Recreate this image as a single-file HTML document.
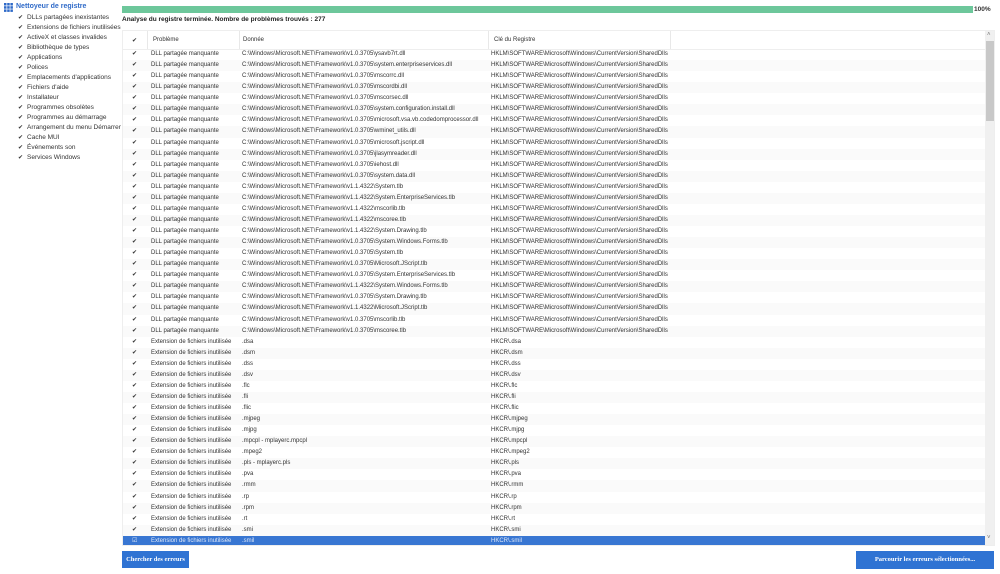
<!DOCTYPE html>
<html><head><meta charset="utf-8"><style>
body{margin:0;width:1000px;height:574px;background:#fff;font-family:"Liberation Sans",sans-serif;position:relative;overflow:hidden;color:#333}
.side{position:absolute;left:0;top:0;font-size:6.5px;color:#333}
.side .t{position:absolute;left:16px;top:3px;font-weight:bold;color:#2f6ac8;font-size:7px;white-space:nowrap}
.side .i{position:absolute;left:18px;white-space:nowrap}
.side .i b{font-weight:normal;font-size:6px;margin-right:4px}
.prog{position:absolute;left:122px;top:6px;width:851px;height:7px;background:#6dc79b}
.pct{position:absolute;left:974px;top:6px;font-size:6.5px;font-weight:bold}
.title{position:absolute;left:122px;top:16px;font-size:6.5px;font-weight:bold;color:#222}
.tbl{position:absolute;left:122px;top:30px;width:873px;height:516px;border:1px solid #eee;box-sizing:border-box;overflow:hidden}
.hd{position:absolute;left:0;top:0;width:862px;height:18px;border-bottom:1px solid #eee}
.hd span{position:absolute;top:6px;font-size:6px}
.vl{position:absolute;top:0;width:1px;height:18px;background:#e8e8e8}
.rows{position:absolute;left:0;top:18px;width:862px}
.r{height:11.07px;position:relative;font-size:6px;line-height:11px;white-space:nowrap}
.r:nth-child(even){background:#fafafa}
.r span{position:absolute;top:0}
.r .c{left:9px;font-size:6px}
.r .p{left:28px}.r .d{left:119px}.r .k{left:368px}
.r.sel{background:#3876d2;color:#dfe8f7}
.sb{position:absolute;left:862px;top:0;width:10px;height:514px;background:#f0f0f0}
.th{position:absolute;left:1px;top:10px;width:8px;height:80px;background:#c8c8c8}
.btn{position:absolute;background:#2f73d3;color:#fff;font-family:"Liberation Serif",serif;font-weight:bold;font-size:6.5px;text-align:center}
</style></head><body>
<div class="side">
<svg style="position:absolute;left:4px;top:3px" width="9" height="9"><g fill="#2f6ac8"><rect x="0" y="0" width="2.5" height="2.5"/><rect x="3.2" y="0" width="2.5" height="2.5"/><rect x="6.4" y="0" width="2.5" height="2.5"/><rect x="0" y="3.2" width="2.5" height="2.5"/><rect x="3.2" y="3.2" width="2.5" height="2.5"/><rect x="6.4" y="3.2" width="2.5" height="2.5"/><rect x="0" y="6.4" width="2.5" height="2.5"/><rect x="3.2" y="6.4" width="2.5" height="2.5"/><rect x="6.4" y="6.4" width="2.5" height="2.5"/></g></svg>
<div class="t">Nettoyeur de registre</div>
<div class="i" style="top:14px"><b>✔</b>DLLs partagées inexistantes</div>
<div class="i" style="top:24px"><b>✔</b>Extensions de fichiers inutilisées</div>
<div class="i" style="top:34px"><b>✔</b>ActiveX et classes invalides</div>
<div class="i" style="top:44px"><b>✔</b>Bibliothèque de types</div>
<div class="i" style="top:54px"><b>✔</b>Applications</div>
<div class="i" style="top:64px"><b>✔</b>Polices</div>
<div class="i" style="top:74px"><b>✔</b>Emplacements d'applications</div>
<div class="i" style="top:84px"><b>✔</b>Fichiers d'aide</div>
<div class="i" style="top:94px"><b>✔</b>Installateur</div>
<div class="i" style="top:104px"><b>✔</b>Programmes obsolètes</div>
<div class="i" style="top:114px"><b>✔</b>Programmes au démarrage</div>
<div class="i" style="top:124px"><b>✔</b>Arrangement du menu Démarrer</div>
<div class="i" style="top:134px"><b>✔</b>Cache MUI</div>
<div class="i" style="top:144px"><b>✔</b>Événements son</div>
<div class="i" style="top:154px"><b>✔</b>Services Windows</div>
</div>
<div class="prog"></div><div class="pct">100%</div>
<div class="title">Analyse du registre terminée. Nombre de problèmes trouvés : 277</div>
<div class="tbl">
<div class="hd"><span style="left:9px">✔</span><span style="left:30px">Problème</span><span style="left:120px">Donnée</span><span style="left:371px">Clé du Registre</span>
<div class="vl" style="left:24px"></div><div class="vl" style="left:116px"></div><div class="vl" style="left:365px"></div><div class="vl" style="left:547px"></div></div>
<div class="rows">
<div class="r"><span class="c">✔</span><span class="p">DLL partagée manquante</span><span class="d">C:\Windows\Microsoft.NET\Framework\v1.0.3705\ysavb7rt.dll</span><span class="k">HKLM\SOFTWARE\Microsoft\Windows\CurrentVersion\SharedDlls</span></div>
<div class="r"><span class="c">✔</span><span class="p">DLL partagée manquante</span><span class="d">C:\Windows\Microsoft.NET\Framework\v1.0.3705\system.enterpriseservices.dll</span><span class="k">HKLM\SOFTWARE\Microsoft\Windows\CurrentVersion\SharedDlls</span></div>
<div class="r"><span class="c">✔</span><span class="p">DLL partagée manquante</span><span class="d">C:\Windows\Microsoft.NET\Framework\v1.0.3705\mscorrc.dll</span><span class="k">HKLM\SOFTWARE\Microsoft\Windows\CurrentVersion\SharedDlls</span></div>
<div class="r"><span class="c">✔</span><span class="p">DLL partagée manquante</span><span class="d">C:\Windows\Microsoft.NET\Framework\v1.0.3705\mscordbi.dll</span><span class="k">HKLM\SOFTWARE\Microsoft\Windows\CurrentVersion\SharedDlls</span></div>
<div class="r"><span class="c">✔</span><span class="p">DLL partagée manquante</span><span class="d">C:\Windows\Microsoft.NET\Framework\v1.0.3705\mscorsec.dll</span><span class="k">HKLM\SOFTWARE\Microsoft\Windows\CurrentVersion\SharedDlls</span></div>
<div class="r"><span class="c">✔</span><span class="p">DLL partagée manquante</span><span class="d">C:\Windows\Microsoft.NET\Framework\v1.0.3705\system.configuration.install.dll</span><span class="k">HKLM\SOFTWARE\Microsoft\Windows\CurrentVersion\SharedDlls</span></div>
<div class="r"><span class="c">✔</span><span class="p">DLL partagée manquante</span><span class="d">C:\Windows\Microsoft.NET\Framework\v1.0.3705\microsoft.vsa.vb.codedomprocessor.dll</span><span class="k">HKLM\SOFTWARE\Microsoft\Windows\CurrentVersion\SharedDlls</span></div>
<div class="r"><span class="c">✔</span><span class="p">DLL partagée manquante</span><span class="d">C:\Windows\Microsoft.NET\Framework\v1.0.3705\wminet_utils.dll</span><span class="k">HKLM\SOFTWARE\Microsoft\Windows\CurrentVersion\SharedDlls</span></div>
<div class="r"><span class="c">✔</span><span class="p">DLL partagée manquante</span><span class="d">C:\Windows\Microsoft.NET\Framework\v1.0.3705\microsoft.jscript.dll</span><span class="k">HKLM\SOFTWARE\Microsoft\Windows\CurrentVersion\SharedDlls</span></div>
<div class="r"><span class="c">✔</span><span class="p">DLL partagée manquante</span><span class="d">C:\Windows\Microsoft.NET\Framework\v1.0.3705\jlasymreader.dll</span><span class="k">HKLM\SOFTWARE\Microsoft\Windows\CurrentVersion\SharedDlls</span></div>
<div class="r"><span class="c">✔</span><span class="p">DLL partagée manquante</span><span class="d">C:\Windows\Microsoft.NET\Framework\v1.0.3705\iehost.dll</span><span class="k">HKLM\SOFTWARE\Microsoft\Windows\CurrentVersion\SharedDlls</span></div>
<div class="r"><span class="c">✔</span><span class="p">DLL partagée manquante</span><span class="d">C:\Windows\Microsoft.NET\Framework\v1.0.3705\system.data.dll</span><span class="k">HKLM\SOFTWARE\Microsoft\Windows\CurrentVersion\SharedDlls</span></div>
<div class="r"><span class="c">✔</span><span class="p">DLL partagée manquante</span><span class="d">C:\Windows\Microsoft.NET\Framework\v1.1.4322\System.tlb</span><span class="k">HKLM\SOFTWARE\Microsoft\Windows\CurrentVersion\SharedDlls</span></div>
<div class="r"><span class="c">✔</span><span class="p">DLL partagée manquante</span><span class="d">C:\Windows\Microsoft.NET\Framework\v1.1.4322\System.EnterpriseServices.tlb</span><span class="k">HKLM\SOFTWARE\Microsoft\Windows\CurrentVersion\SharedDlls</span></div>
<div class="r"><span class="c">✔</span><span class="p">DLL partagée manquante</span><span class="d">C:\Windows\Microsoft.NET\Framework\v1.1.4322\mscorlib.tlb</span><span class="k">HKLM\SOFTWARE\Microsoft\Windows\CurrentVersion\SharedDlls</span></div>
<div class="r"><span class="c">✔</span><span class="p">DLL partagée manquante</span><span class="d">C:\Windows\Microsoft.NET\Framework\v1.1.4322\mscoree.tlb</span><span class="k">HKLM\SOFTWARE\Microsoft\Windows\CurrentVersion\SharedDlls</span></div>
<div class="r"><span class="c">✔</span><span class="p">DLL partagée manquante</span><span class="d">C:\Windows\Microsoft.NET\Framework\v1.1.4322\System.Drawing.tlb</span><span class="k">HKLM\SOFTWARE\Microsoft\Windows\CurrentVersion\SharedDlls</span></div>
<div class="r"><span class="c">✔</span><span class="p">DLL partagée manquante</span><span class="d">C:\Windows\Microsoft.NET\Framework\v1.0.3705\System.Windows.Forms.tlb</span><span class="k">HKLM\SOFTWARE\Microsoft\Windows\CurrentVersion\SharedDlls</span></div>
<div class="r"><span class="c">✔</span><span class="p">DLL partagée manquante</span><span class="d">C:\Windows\Microsoft.NET\Framework\v1.0.3705\System.tlb</span><span class="k">HKLM\SOFTWARE\Microsoft\Windows\CurrentVersion\SharedDlls</span></div>
<div class="r"><span class="c">✔</span><span class="p">DLL partagée manquante</span><span class="d">C:\Windows\Microsoft.NET\Framework\v1.0.3705\Microsoft.JScript.tlb</span><span class="k">HKLM\SOFTWARE\Microsoft\Windows\CurrentVersion\SharedDlls</span></div>
<div class="r"><span class="c">✔</span><span class="p">DLL partagée manquante</span><span class="d">C:\Windows\Microsoft.NET\Framework\v1.0.3705\System.EnterpriseServices.tlb</span><span class="k">HKLM\SOFTWARE\Microsoft\Windows\CurrentVersion\SharedDlls</span></div>
<div class="r"><span class="c">✔</span><span class="p">DLL partagée manquante</span><span class="d">C:\Windows\Microsoft.NET\Framework\v1.1.4322\System.Windows.Forms.tlb</span><span class="k">HKLM\SOFTWARE\Microsoft\Windows\CurrentVersion\SharedDlls</span></div>
<div class="r"><span class="c">✔</span><span class="p">DLL partagée manquante</span><span class="d">C:\Windows\Microsoft.NET\Framework\v1.0.3705\System.Drawing.tlb</span><span class="k">HKLM\SOFTWARE\Microsoft\Windows\CurrentVersion\SharedDlls</span></div>
<div class="r"><span class="c">✔</span><span class="p">DLL partagée manquante</span><span class="d">C:\Windows\Microsoft.NET\Framework\v1.1.4322\Microsoft.JScript.tlb</span><span class="k">HKLM\SOFTWARE\Microsoft\Windows\CurrentVersion\SharedDlls</span></div>
<div class="r"><span class="c">✔</span><span class="p">DLL partagée manquante</span><span class="d">C:\Windows\Microsoft.NET\Framework\v1.0.3705\mscorlib.tlb</span><span class="k">HKLM\SOFTWARE\Microsoft\Windows\CurrentVersion\SharedDlls</span></div>
<div class="r"><span class="c">✔</span><span class="p">DLL partagée manquante</span><span class="d">C:\Windows\Microsoft.NET\Framework\v1.0.3705\mscoree.tlb</span><span class="k">HKLM\SOFTWARE\Microsoft\Windows\CurrentVersion\SharedDlls</span></div>
<div class="r"><span class="c">✔</span><span class="p">Extension de fichiers inutilisée</span><span class="d">.dsa</span><span class="k">HKCR\.dsa</span></div>
<div class="r"><span class="c">✔</span><span class="p">Extension de fichiers inutilisée</span><span class="d">.dsm</span><span class="k">HKCR\.dsm</span></div>
<div class="r"><span class="c">✔</span><span class="p">Extension de fichiers inutilisée</span><span class="d">.dss</span><span class="k">HKCR\.dss</span></div>
<div class="r"><span class="c">✔</span><span class="p">Extension de fichiers inutilisée</span><span class="d">.dsv</span><span class="k">HKCR\.dsv</span></div>
<div class="r"><span class="c">✔</span><span class="p">Extension de fichiers inutilisée</span><span class="d">.flc</span><span class="k">HKCR\.flc</span></div>
<div class="r"><span class="c">✔</span><span class="p">Extension de fichiers inutilisée</span><span class="d">.fli</span><span class="k">HKCR\.fli</span></div>
<div class="r"><span class="c">✔</span><span class="p">Extension de fichiers inutilisée</span><span class="d">.flic</span><span class="k">HKCR\.flic</span></div>
<div class="r"><span class="c">✔</span><span class="p">Extension de fichiers inutilisée</span><span class="d">.mjpeg</span><span class="k">HKCR\.mjpeg</span></div>
<div class="r"><span class="c">✔</span><span class="p">Extension de fichiers inutilisée</span><span class="d">.mjpg</span><span class="k">HKCR\.mjpg</span></div>
<div class="r"><span class="c">✔</span><span class="p">Extension de fichiers inutilisée</span><span class="d">.mpcpl - mplayerc.mpcpl</span><span class="k">HKCR\.mpcpl</span></div>
<div class="r"><span class="c">✔</span><span class="p">Extension de fichiers inutilisée</span><span class="d">.mpeg2</span><span class="k">HKCR\.mpeg2</span></div>
<div class="r"><span class="c">✔</span><span class="p">Extension de fichiers inutilisée</span><span class="d">.pls - mplayerc.pls</span><span class="k">HKCR\.pls</span></div>
<div class="r"><span class="c">✔</span><span class="p">Extension de fichiers inutilisée</span><span class="d">.pva</span><span class="k">HKCR\.pva</span></div>
<div class="r"><span class="c">✔</span><span class="p">Extension de fichiers inutilisée</span><span class="d">.rmm</span><span class="k">HKCR\.rmm</span></div>
<div class="r"><span class="c">✔</span><span class="p">Extension de fichiers inutilisée</span><span class="d">.rp</span><span class="k">HKCR\.rp</span></div>
<div class="r"><span class="c">✔</span><span class="p">Extension de fichiers inutilisée</span><span class="d">.rpm</span><span class="k">HKCR\.rpm</span></div>
<div class="r"><span class="c">✔</span><span class="p">Extension de fichiers inutilisée</span><span class="d">.rt</span><span class="k">HKCR\.rt</span></div>
<div class="r"><span class="c">✔</span><span class="p">Extension de fichiers inutilisée</span><span class="d">.smi</span><span class="k">HKCR\.smi</span></div>
<div class="r sel"><span class="c">☑</span><span class="p">Extension de fichiers inutilisée</span><span class="d">.smil</span><span class="k">HKCR\.smil</span></div>
</div>
<div class="sb"><div style="position:absolute;left:2px;top:1px;font-size:6px;color:#777">˄</div><div class="th"></div><div style="position:absolute;left:2px;top:504px;font-size:6px;color:#777">˅</div></div>
</div>
<div class="btn" style="left:122px;top:551px;width:67px;height:17px;line-height:17px">Chercher des erreurs</div>
<div class="btn" style="left:856px;top:551px;width:138px;height:18px;line-height:18px">Parcourir les erreurs sélectionnées...</div>
</body></html>
